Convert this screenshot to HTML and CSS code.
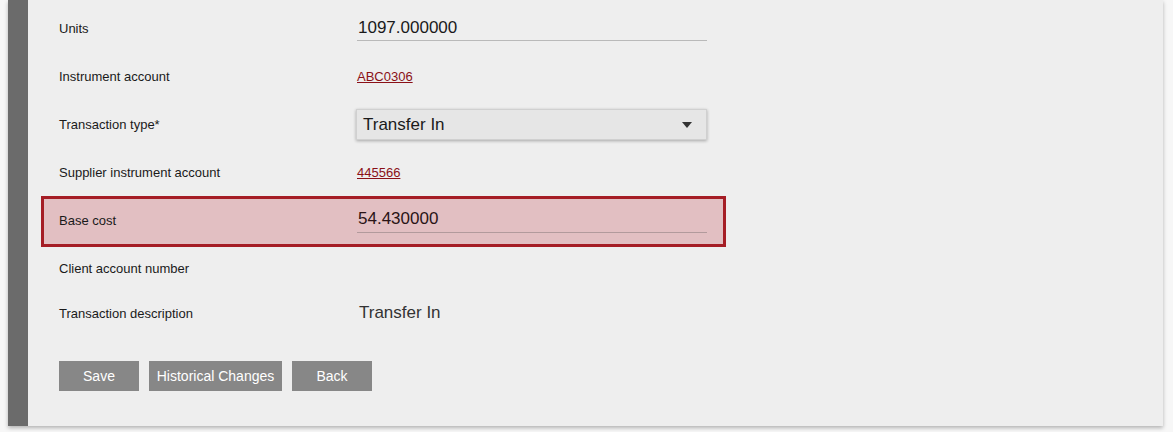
FILE: index.html
```html
<!DOCTYPE html>
<html lang="en">
<head>
<meta charset="utf-8">
<title>Transaction</title>
<link rel="stylesheet" href="styles.css">
</head>
<body>
<div class="card">
  <div class="card-body">
    <form class="form">
      <div class="row row-units">
        <label class="label">Units</label>
        <div class="value"><input class="field" type="text" value="1097.000000"></div>
      </div>
      <div class="row row-instrument">
        <span class="label">Instrument account</span>
        <div class="value"><a class="link" href="#">ABC0306</a></div>
      </div>
      <div class="row row-type">
        <label class="label">Transaction type*</label>
        <div class="value">
          <div class="select">
            <span class="select-text">Transfer In</span>
            <svg class="select-caret" width="10" height="6" viewBox="0 0 10 6"><path d="M0 0H10L5 6Z" fill="#333"/></svg>
          </div>
        </div>
      </div>
      <div class="row row-supplier">
        <span class="label">Supplier instrument account</span>
        <div class="value"><a class="link" href="#">445566</a></div>
      </div>
      <div class="row row-base row-error">
        <label class="label">Base cost</label>
        <div class="value"><input class="field" type="text" value="54.430000"></div>
      </div>
      <div class="row row-client">
        <span class="label">Client account number</span>
        <div class="value"></div>
      </div>
      <div class="row row-desc">
        <span class="label">Transaction description</span>
        <div class="value"><span class="plain">Transfer In</span></div>
      </div>
    </form>
    <div class="actions">
      <button class="btn btn-narrow" type="button">Save</button>
      <button class="btn btn-wide" type="button">Historical Changes</button>
      <button class="btn btn-narrow" type="button">Back</button>
    </div>
  </div>
</div>
</body>
</html>
```
FILE: styles.css
```css
html, body {
  margin: 0;
  padding: 0;
}

body {
  background: #f7f7f7;
  font-family: "Liberation Sans", Arial, sans-serif;
  color: #222;
  height: 432px;
  overflow: hidden;
}

.card {
  margin-left: 8px;
  width: 1155px;
  height: 426px;
  box-sizing: border-box;
  background: #eeeeee;
  border-left: 20px solid #6b6b6b;
  box-shadow: 0 2px 4px rgba(0, 0, 0, 0.28);
}

.card-body {
  padding: 4px 0 0 13px;
}

.form {
  display: flex;
  flex-direction: column;
}

.row {
  display: grid;
  grid-template-columns: 298px 350px;
  align-items: center;
  width: 685px;
  box-sizing: border-box;
  border: 3px solid transparent;
  padding: 0 16px 0 15px;
  height: 47px;
}

.row-units { height: 48px; }
.row-instrument { height: 48px; }
.row-type { height: 49px; }
.row-supplier { height: 47px; }
.row-base { height: 51px; padding-bottom: 2px; }
.row-base .value { margin-bottom: 2px; }
.row-client { height: 42px; }
.row-desc { height: 48px; }

.row-error {
  background: #e2bfc2;
  border-color: #a51d25;
}

.label {
  font-size: 13px;
  color: #1a1a1a;
}

.value {
  display: flex;
  align-items: center;
}

.field {
  width: 350px;
  height: 26px;
  box-sizing: border-box;
  margin: 0;
  padding: 0 1px;
  border: 0;
  border-bottom: 1px solid #b9b9b9;
  background: transparent;
  font-family: "Liberation Sans", Arial, sans-serif;
  font-size: 17px;
  color: #1a1a1a;
  outline: none;
}

.row-error .field {
  border-bottom-color: #b29a9c;
  color: #2a1416;
}

.link {
  font-size: 13px;
  color: #8a1017;
  text-decoration: underline;
}

.select {
  width: 351px;
  height: 31px;
  margin-left: -1px;
  box-sizing: border-box;
  display: flex;
  align-items: center;
  justify-content: space-between;
  padding: 0 14px 0 6px;
  background: #e6e6e6;
  border: 1px solid #d0d0d0;
  box-shadow: 0 1px 3px rgba(0, 0, 0, 0.3);
}

.select-text {
  font-size: 17px;
  color: #1a1a1a;
}

.select-caret {
  display: block;
}

.plain {
  font-size: 17px;
  color: #333;
  padding-left: 2px;
}

.actions {
  display: flex;
  gap: 10px;
  margin: 24px 0 0 18px;
}

.btn {
  height: 30px;
  padding: 0;
  border: 0;
  background: #878787;
  color: #fff;
  font-family: "Liberation Sans", Arial, sans-serif;
  font-size: 14px;
  cursor: pointer;
}

.btn-narrow {
  width: 80px;
}

.btn-wide {
  width: 133px;
}
```
